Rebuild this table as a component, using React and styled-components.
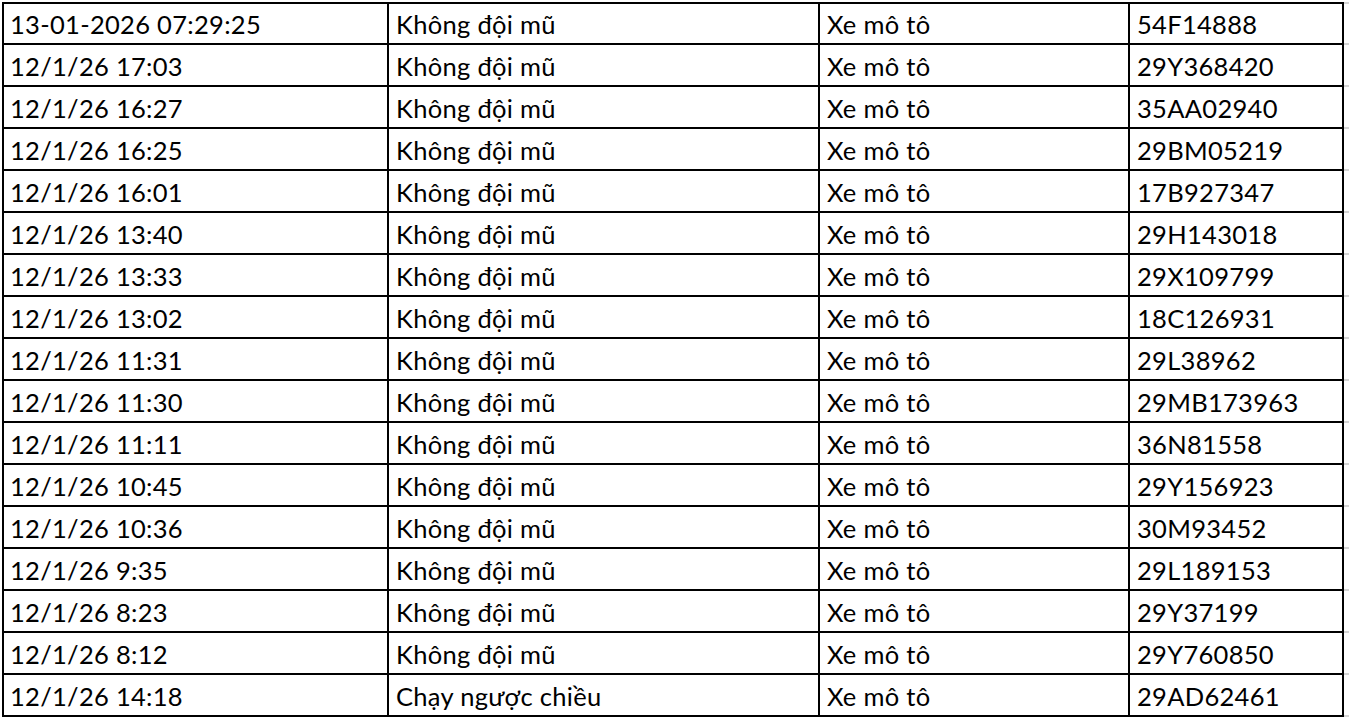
import React from "react";
import styled, { createGlobalStyle } from "styled-components";

const Global = createGlobalStyle`
  html, body { margin: 0; padding: 0; background: #ffffff; }
  body { font-family: Lato, "Open Sans", "Liberation Sans", sans-serif; color: #000; }
`;

const Sheet = styled.div`
  display: grid;
  grid-template-columns: 387px 431px 310px 214px 1fr;
  margin: 2px 0 0 2px;
`;

const Cell = styled.div`
  box-sizing: border-box;
  height: ${(p) => (p.$top ? "43px" : "42px")};
  border-right: 2px solid #000;
  border-bottom: 2px solid #000;
  border-left: ${(p) => (p.$first ? "2px solid #000" : "none")};
  border-top: ${(p) => (p.$top ? "2px solid #000" : "none")};
  padding: ${(p) => (p.$top ? "5px" : "6px")} 0 0 ${(p) => (p.$first ? "6px" : "7px")};
  font-size: 25.5px;
  letter-spacing: 0.3px;
  line-height: 1.2;
  white-space: nowrap;
  overflow: hidden;
`;

const Filler = styled.div`
  box-sizing: border-box;
  height: ${(p) => (p.$top ? "43px" : "42px")};
  border-bottom: 2px solid #d4d4d4;
  border-top: ${(p) => (p.$top ? "2px solid #d4d4d4" : "none")};
`;

const rows = [
  ["13-01-2026 07:29:25", "Không đội mũ", "Xe mô tô", "54F14888"],
  ["12/1/26 17:03", "Không đội mũ", "Xe mô tô", "29Y368420"],
  ["12/1/26 16:27", "Không đội mũ", "Xe mô tô", "35AA02940"],
  ["12/1/26 16:25", "Không đội mũ", "Xe mô tô", "29BM05219"],
  ["12/1/26 16:01", "Không đội mũ", "Xe mô tô", "17B927347"],
  ["12/1/26 13:40", "Không đội mũ", "Xe mô tô", "29H143018"],
  ["12/1/26 13:33", "Không đội mũ", "Xe mô tô", "29X109799"],
  ["12/1/26 13:02", "Không đội mũ", "Xe mô tô", "18C126931"],
  ["12/1/26 11:31", "Không đội mũ", "Xe mô tô", "29L38962"],
  ["12/1/26 11:30", "Không đội mũ", "Xe mô tô", "29MB173963"],
  ["12/1/26 11:11", "Không đội mũ", "Xe mô tô", "36N81558"],
  ["12/1/26 10:45", "Không đội mũ", "Xe mô tô", "29Y156923"],
  ["12/1/26 10:36", "Không đội mũ", "Xe mô tô", "30M93452"],
  ["12/1/26 9:35", "Không đội mũ", "Xe mô tô", "29L189153"],
  ["12/1/26 8:23", "Không đội mũ", "Xe mô tô", "29Y37199"],
  ["12/1/26 8:12", "Không đội mũ", "Xe mô tô", "29Y760850"],
  ["12/1/26 14:18", "Chạy ngược chiều", "Xe mô tô", "29AD62461"],
];

export default function App() {
  return (
    <>
      <Global />
      <Sheet>
        {rows.map((r, i) => (
          <React.Fragment key={i}>
            {r.map((v, j) => (
              <Cell key={j} $first={j === 0} $top={i === 0}>
                {v}
              </Cell>
            ))}
            <Filler $top={i === 0} />
          </React.Fragment>
        ))}
      </Sheet>
    </>
  );
}
